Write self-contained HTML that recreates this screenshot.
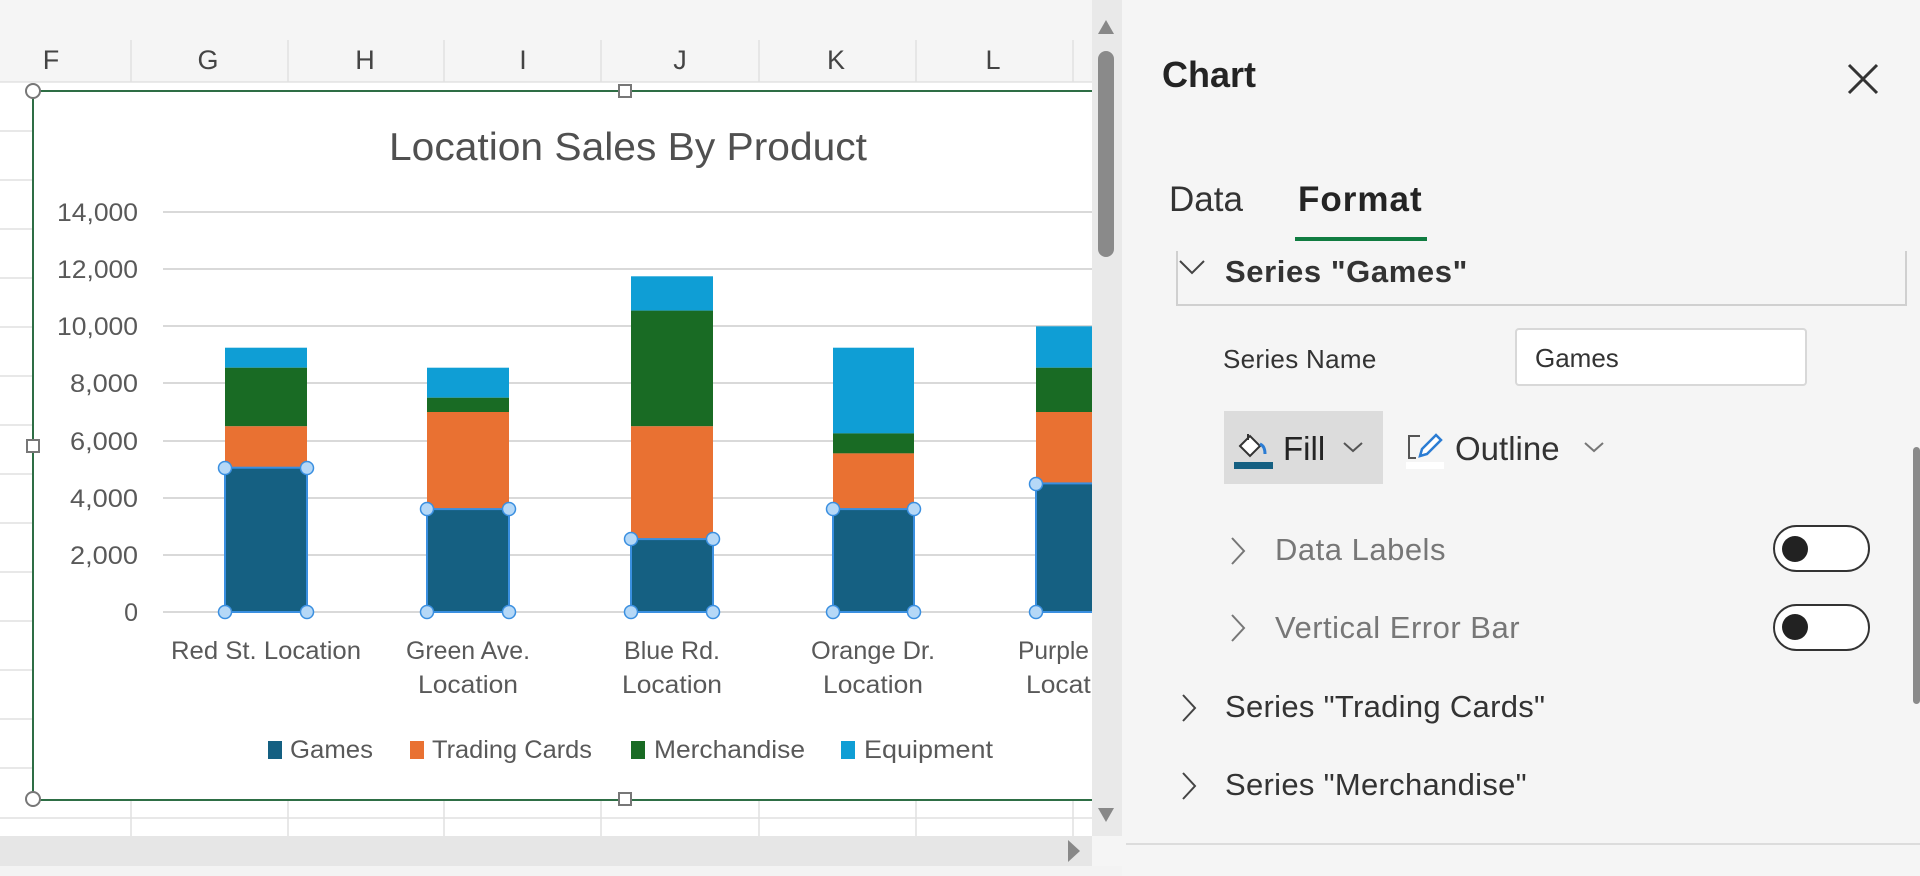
<!DOCTYPE html>
<html><head><meta charset="utf-8"><style>
*{margin:0;padding:0;box-sizing:border-box}
body{width:1920px;height:876px;overflow:hidden;background:#f5f5f5;position:relative;font-family:"Liberation Sans",sans-serif}
.p{position:absolute;white-space:nowrap}
</style></head><body>
<svg class="p" style="left:0;top:0" width="1122" height="876" viewBox="0 0 1122 876">
<rect x="0" y="0" width="1092" height="836" fill="#fff"/>
<rect x="0" y="0" width="1092" height="82" fill="#f5f5f5"/>
<line x1="0" y1="82" x2="1092" y2="82" stroke="#d6d6d6"/>
<g stroke="#e0e0e0" stroke-width="1.5">
<line x1="131" y1="40" x2="131" y2="82"/><line x1="288" y1="40" x2="288" y2="82"/><line x1="444" y1="40" x2="444" y2="82"/><line x1="601" y1="40" x2="601" y2="82"/><line x1="759" y1="40" x2="759" y2="82"/><line x1="916" y1="40" x2="916" y2="82"/><line x1="1073" y1="40" x2="1073" y2="82"/>
<line x1="131" y1="800" x2="131" y2="836"/><line x1="288" y1="800" x2="288" y2="836"/><line x1="444" y1="800" x2="444" y2="836"/><line x1="601" y1="800" x2="601" y2="836"/><line x1="759" y1="800" x2="759" y2="836"/><line x1="916" y1="800" x2="916" y2="836"/><line x1="1073" y1="800" x2="1073" y2="836"/>
<line x1="0" y1="818" x2="1092" y2="818"/>
<line x1="0" y1="131" x2="33" y2="131"/><line x1="0" y1="180" x2="33" y2="180"/><line x1="0" y1="229" x2="33" y2="229"/><line x1="0" y1="278" x2="33" y2="278"/><line x1="0" y1="327" x2="33" y2="327"/><line x1="0" y1="376" x2="33" y2="376"/><line x1="0" y1="425" x2="33" y2="425"/><line x1="0" y1="474" x2="33" y2="474"/><line x1="0" y1="523" x2="33" y2="523"/><line x1="0" y1="572" x2="33" y2="572"/><line x1="0" y1="621" x2="33" y2="621"/><line x1="0" y1="670" x2="33" y2="670"/><line x1="0" y1="719" x2="33" y2="719"/><line x1="0" y1="768" x2="33" y2="768"/>
</g>
<g font-size="27" fill="#444" text-anchor="middle" font-family="Liberation Sans">
<text x="51" y="69">F</text><text x="208" y="69">G</text><text x="365" y="69">H</text><text x="523" y="69">I</text><text x="680" y="69">J</text><text x="836" y="69">K</text><text x="993" y="69">L</text>
</g>
<rect x="33" y="91" width="1080" height="709" fill="#fff" stroke="#2e6e45" stroke-width="2"/>
<text x="628" y="160" font-size="39" fill="#505050" text-anchor="middle" textLength="478" lengthAdjust="spacingAndGlyphs">Location Sales By Product</text>
<g stroke="#d9d9d9" stroke-width="2">
<line x1="163" y1="212" x2="1092" y2="212"/><line x1="163" y1="269" x2="1092" y2="269"/><line x1="163" y1="326" x2="1092" y2="326"/><line x1="163" y1="383" x2="1092" y2="383"/><line x1="163" y1="441" x2="1092" y2="441"/><line x1="163" y1="498" x2="1092" y2="498"/><line x1="163" y1="555" x2="1092" y2="555"/><line x1="163" y1="612" x2="1092" y2="612"/>
</g>
<g font-size="25" fill="#595959" text-anchor="end" lengthAdjust="spacingAndGlyphs">
<text x="138" y="221" textLength="81" lengthAdjust="spacingAndGlyphs">14,000</text><text x="138" y="278" textLength="81" lengthAdjust="spacingAndGlyphs">12,000</text><text x="138" y="335" textLength="81" lengthAdjust="spacingAndGlyphs">10,000</text><text x="138" y="392" textLength="68" lengthAdjust="spacingAndGlyphs">8,000</text><text x="138" y="450" textLength="68" lengthAdjust="spacingAndGlyphs">6,000</text><text x="138" y="507" textLength="68" lengthAdjust="spacingAndGlyphs">4,000</text><text x="138" y="564" textLength="68" lengthAdjust="spacingAndGlyphs">2,000</text><text x="138" y="621">0</text>
</g>
<g>
<rect x="225" y="347.7" width="82" height="20" fill="#0f9ed5"/><rect x="225" y="367.7" width="82" height="58.6" fill="#196b24"/><rect x="225" y="426.3" width="82" height="41.4" fill="#e97132"/><rect x="225" y="467.7" width="82" height="144.3" fill="#156082"/>
<rect x="427" y="367.7" width="82" height="30" fill="#0f9ed5"/><rect x="427" y="397.7" width="82" height="14.3" fill="#196b24"/><rect x="427" y="412" width="82" height="97.1" fill="#e97132"/><rect x="427" y="509.1" width="82" height="102.9" fill="#156082"/>
<rect x="631" y="276.3" width="82" height="34.3" fill="#0f9ed5"/><rect x="631" y="310.6" width="82" height="115.7" fill="#196b24"/><rect x="631" y="426.3" width="82" height="112.8" fill="#e97132"/><rect x="631" y="539.1" width="82" height="72.9" fill="#156082"/>
<rect x="833" y="347.7" width="81" height="85.7" fill="#0f9ed5"/><rect x="833" y="433.4" width="81" height="20" fill="#196b24"/><rect x="833" y="453.4" width="81" height="55.7" fill="#e97132"/><rect x="833" y="509.1" width="81" height="102.9" fill="#156082"/>
<rect x="1036" y="326.3" width="56" height="41.4" fill="#0f9ed5"/><rect x="1036" y="367.7" width="56" height="44.3" fill="#196b24"/><rect x="1036" y="412" width="56" height="71.4" fill="#e97132"/><rect x="1036" y="483.4" width="56" height="128.6" fill="#156082"/>
</g>
<g fill="none" stroke="#3a8fe0" stroke-width="2">
<rect x="225" y="467.7" width="82" height="144.3"/><rect x="427" y="509.1" width="82" height="102.9"/><rect x="631" y="539.1" width="82" height="72.9"/><rect x="833" y="509.1" width="81" height="102.9"/><rect x="1036" y="483.4" width="60" height="128.6"/>
</g>
<g fill="#b5d8f7" stroke="#3a8fe0" stroke-width="1.5">
<circle cx="225" cy="468" r="6.5"/><circle cx="307" cy="468" r="6.5"/><circle cx="225" cy="612" r="6.5"/><circle cx="307" cy="612" r="6.5"/>
<circle cx="427" cy="509" r="6.5"/><circle cx="509" cy="509" r="6.5"/><circle cx="427" cy="612" r="6.5"/><circle cx="509" cy="612" r="6.5"/>
<circle cx="631" cy="539" r="6.5"/><circle cx="713" cy="539" r="6.5"/><circle cx="631" cy="612" r="6.5"/><circle cx="713" cy="612" r="6.5"/>
<circle cx="833" cy="509" r="6.5"/><circle cx="914" cy="509" r="6.5"/><circle cx="833" cy="612" r="6.5"/><circle cx="914" cy="612" r="6.5"/>
<circle cx="1036" cy="484" r="6.5"/><circle cx="1036" cy="612" r="6.5"/>
</g>
<g font-size="25" fill="#595959" text-anchor="middle">
<text x="266" y="659" textLength="190" lengthAdjust="spacingAndGlyphs">Red St. Location</text>
<text x="468" y="659" textLength="124" lengthAdjust="spacingAndGlyphs">Green Ave.</text><text x="468" y="693" textLength="100" lengthAdjust="spacingAndGlyphs">Location</text>
<text x="672" y="659" textLength="96" lengthAdjust="spacingAndGlyphs">Blue Rd.</text><text x="672" y="693" textLength="100" lengthAdjust="spacingAndGlyphs">Location</text>
<text x="873" y="659" textLength="124" lengthAdjust="spacingAndGlyphs">Orange Dr.</text><text x="873" y="693" textLength="100" lengthAdjust="spacingAndGlyphs">Location</text>
<text x="1076" y="659" textLength="116" lengthAdjust="spacingAndGlyphs">Purple Rd.</text><text x="1076" y="693" textLength="100" lengthAdjust="spacingAndGlyphs">Location</text>
</g>
<g font-size="25" fill="#595959">
<rect x="268" y="741" width="14" height="18" fill="#156082"/><text x="290" y="758" textLength="83" lengthAdjust="spacingAndGlyphs">Games</text>
<rect x="410" y="741" width="14" height="18" fill="#e97132"/><text x="432" y="758" textLength="160" lengthAdjust="spacingAndGlyphs">Trading Cards</text>
<rect x="631" y="741" width="14" height="18" fill="#196b24"/><text x="654" y="758" textLength="151" lengthAdjust="spacingAndGlyphs">Merchandise</text>
<rect x="841" y="741" width="14" height="18" fill="#0f9ed5"/><text x="864" y="758" textLength="129" lengthAdjust="spacingAndGlyphs">Equipment</text>
</g>
<g fill="#fff" stroke="#777" stroke-width="2">
<circle cx="33" cy="91" r="7"/><circle cx="33" cy="799" r="7"/>
<rect x="619" y="85" width="12" height="12"/><rect x="619" y="793" width="12" height="12"/><rect x="27" y="440" width="12" height="12"/>
</g>
<rect x="1092" y="0" width="30" height="836" fill="#e9e9e9"/>
<rect x="1098" y="51" width="16" height="206" rx="8" fill="#8a8a8a"/>
<path d="M1098 34 L1114 34 L1106 20Z" fill="#888"/>
<path d="M1098 808 L1114 808 L1106 822Z" fill="#888"/>
<rect x="0" y="836" width="1092" height="30" fill="#e6e6e6"/>
<path d="M1068 840 L1080 851 L1068 862Z" fill="#888"/>
<rect x="0" y="866" width="1122" height="10" fill="#f3f3f3"/>
</svg>
<div class="p" style="left:1162px;top:54px;font-size:36px;font-weight:bold;color:#242424">Chart</div>
<svg class="p" style="left:1847px;top:63px" width="32" height="32"><path d="M2 2L30 30M30 2L2 30" stroke="#333" stroke-width="3"/></svg>
<div class="p" style="left:1169px;top:180px;font-size:35px;color:#333">Data</div>
<div class="p" style="left:1298px;top:180px;font-size:35px;font-weight:bold;color:#242424;letter-spacing:1px">Format</div>
<div class="p" style="left:1295px;top:237px;width:132px;height:4px;background:#107c41"></div>
<div class="p" style="left:1176px;top:251px;width:731px;height:55px;border:2px solid #d0d0d0;border-top:none"></div>
<svg class="p" style="left:1177px;top:257px" width="30" height="22"><path d="M3 4L15 16L27 4" stroke="#444" stroke-width="2" fill="none"/></svg>
<div class="p" style="left:1225px;top:254px;font-size:31px;font-weight:bold;color:#333;letter-spacing:0.6px">Series "Games"</div>
<div class="p" style="left:1223px;top:344px;font-size:26px;color:#333;letter-spacing:0.3px">Series Name</div>
<div class="p" style="left:1515px;top:328px;width:292px;height:58px;background:#fff;border:2px solid #d8d8d8;border-radius:4px;font-size:26px;color:#333;padding:13px 18px">Games</div>
<div class="p" style="left:1224px;top:411px;width:159px;height:73px;background:#dcdcdc"></div>
<svg class="p" style="left:1232px;top:430px" width="42" height="40"><path d="M8 16L18 6L28 16L18 26Z" fill="#fff" stroke="#333" stroke-width="2"/><path d="M16 4V10" stroke="#333" stroke-width="2"/><path d="M28 14Q33 16 33 24" stroke="#2b7cd3" stroke-width="3" fill="none"/><rect x="2" y="32" width="39" height="7" fill="#156082"/></svg>
<div class="p" style="left:1283px;top:430px;font-size:33px;color:#242424">Fill</div>
<svg class="p" style="left:1342px;top:440px" width="22" height="14"><path d="M2 3L11 11L20 3" stroke="#555" stroke-width="2" fill="none"/></svg>
<svg class="p" style="left:1406px;top:430px" width="40" height="40"><path d="M14 6H3V28H10" stroke="#555" stroke-width="2" fill="none"/><path d="M14 26L16 19L30 5L35 10L21 24Z" fill="#fff" stroke="#2b7cd3" stroke-width="2.5"/><rect x="0" y="32" width="38" height="7" fill="#fff"/></svg>
<div class="p" style="left:1455px;top:430px;font-size:33px;color:#333">Outline</div>
<svg class="p" style="left:1583px;top:440px" width="22" height="14"><path d="M2 3L11 11L20 3" stroke="#777" stroke-width="2" fill="none"/></svg>
<svg class="p" style="left:1228px;top:535px" width="20" height="32"><path d="M4 3L16 16L4 29" stroke="#777" stroke-width="2" fill="none"/></svg>
<div class="p" style="left:1275px;top:532px;font-size:31px;color:#777;letter-spacing:0.5px">Data Labels</div>
<div class="p" style="left:1773px;top:525px;width:97px;height:47px;border:2px solid #333;border-radius:24px;background:#fff"></div>
<div class="p" style="left:1782px;top:536px;width:26px;height:26px;border-radius:50%;background:#222"></div>
<svg class="p" style="left:1228px;top:612px" width="20" height="32"><path d="M4 3L16 16L4 29" stroke="#777" stroke-width="2" fill="none"/></svg>
<div class="p" style="left:1275px;top:610px;font-size:31px;color:#777;letter-spacing:0.5px">Vertical Error Bar</div>
<div class="p" style="left:1773px;top:604px;width:97px;height:47px;border:2px solid #333;border-radius:24px;background:#fff"></div>
<div class="p" style="left:1782px;top:614px;width:26px;height:26px;border-radius:50%;background:#222"></div>
<svg class="p" style="left:1179px;top:692px" width="20" height="32"><path d="M4 3L16 16L4 29" stroke="#444" stroke-width="2" fill="none"/></svg>
<div class="p" style="left:1225px;top:689px;font-size:31px;color:#333;letter-spacing:0.3px">Series "Trading Cards"</div>
<svg class="p" style="left:1179px;top:770px" width="20" height="32"><path d="M4 3L16 16L4 29" stroke="#444" stroke-width="2" fill="none"/></svg>
<div class="p" style="left:1225px;top:767px;font-size:31px;color:#333;letter-spacing:0.3px">Series "Merchandise"</div>
<div class="p" style="left:1126px;top:843px;width:794px;height:2px;background:#dcdcdc"></div>
<div class="p" style="left:1913px;top:447px;width:7px;height:257px;background:#8a8a8a;border-radius:4px"></div>
</body></html>
